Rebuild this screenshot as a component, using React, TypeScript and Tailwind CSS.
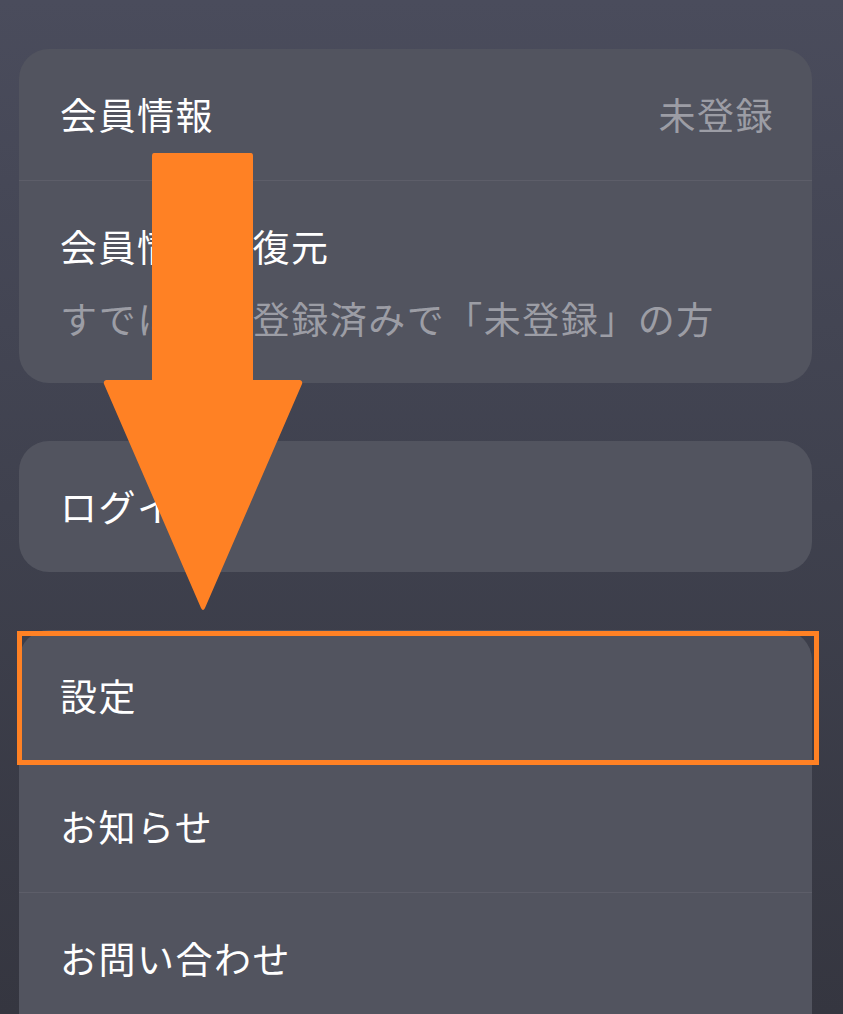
import React from 'react';

const font = { fontFamily: '"Noto Sans CJK JP", "Noto Sans", sans-serif' };

function Row({ label, right, sub, divider, tall }: { label: string; right?: string; sub?: string; divider?: boolean; tall?: boolean }) {
  return (
    <div className={`flex flex-col justify-center pl-[41px] pr-[38px] ${tall ? 'h-[203px]' : 'h-[131px]'} ${divider ? 'border-t border-[#5d5e69]' : ''}`}>
      <div className="flex items-center justify-between">
        <span className="text-[37px] leading-none text-white tracking-[1.5px]">{label}</span>
        {right && <span className="text-[37px] leading-none text-[#9c9da5] tracking-[1.5px]">{right}</span>}
      </div>
      {sub && <span className="mt-[35px] text-[37px] leading-none text-[#9c9da5] tracking-[1.5px]">{sub}</span>}
    </div>
  );
}

export default function App() {
  return (
    <div className="relative h-[1014px] w-[843px] overflow-hidden bg-gradient-to-b from-[#4a4c5c] via-[#3f414e] to-[#353640]" style={font}>
      <div className="flex flex-col gap-[58px] pl-[19px] pr-[31px] pt-[49px]">
        <div className="overflow-hidden rounded-[30px] bg-[#52545f]">
          <Row label="会員情報" right="未登録" />
          <Row label="会員情報の復元" sub="すでに会員登録済みで「未登録」の方" divider tall />
        </div>
        <div className="overflow-hidden rounded-[30px] bg-[#52545f]">
          <Row label="ログイン" />
        </div>
        <div className="overflow-hidden rounded-t-[30px] bg-[#52545f]">
          <Row label="設定" />
          <Row label="お知らせ" />
          <Row label="お問い合わせ" divider />
        </div>
      </div>

      {/* highlight box */}
      <div className="absolute left-[17px] top-[631px] h-[134px] w-[802px] border-[5px] border-[#ff8124]" />

      {/* arrow */}
      <svg className="absolute left-0 top-0" width="843" height="1014" viewBox="0 0 843 1014">
        <path d="M154 153 H251 Q253 153 253 156 V380 H300 Q303 381 302 384 L205 608 Q203 612 201 608 L104 384 Q103 381 106 380 H152 V156 Q152 153 154 153 Z" fill="#ff8124" />
      </svg>
    </div>
  );
}
